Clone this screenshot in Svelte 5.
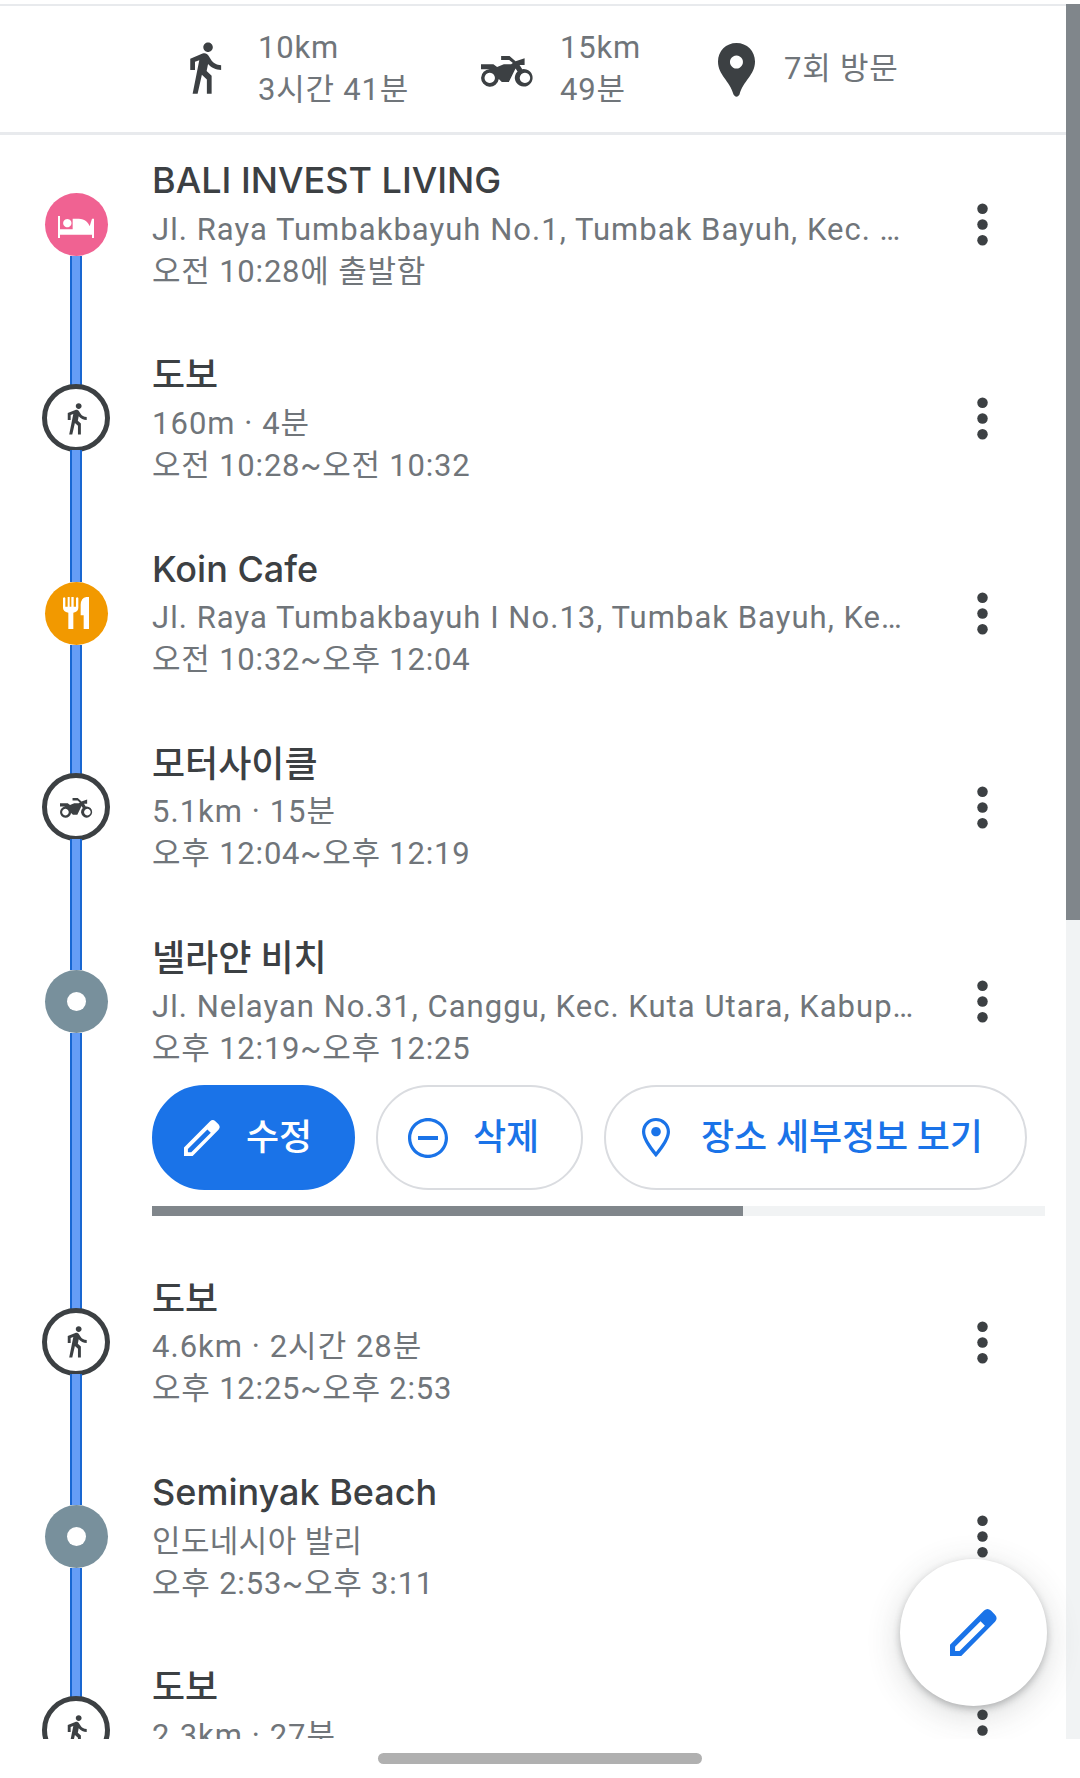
<script lang="ts">
    type Stop = {
        kind: string;
        title: string;
        detail: string;
        time: string;
        transport?: boolean;
        open?: boolean;
    };

    const icons: Record<string, { box: string, path: string }> = {
        walk: {
            box: "0 0 24 24",
            path: "M13.5 5.5c1.1 0 2-.9 2-2s-.9-2-2-2-2 .9-2 2 .9 2 2 2zM9.8 8.9L7 23h2.1l1.8-8 2.1 2v6h2v-7.5l-2.1-2 .6-3C14.8 12 16.8 13 19 13v-2c-1.9 0-3.5-1-4.3-2.4l-1-1.6c-.4-.6-1-1-1.7-1-.3 0-.5.1-.8.1L6 8.3V13h2V9.6l1.8-.7"
        },
        motorcycle: {
            box: "0 0 158 94",
            path: "M60 0h25l18 16 27-9v20h-15l8 13a26.500 26.500 0 1 1-14 7l-6-9-20 41H62l-9-9A26.500 26.500 0 1 1 26 40H0V25h37l11 8 20-8h22l5-4-11-9H60zM26 51a15.500 15.500 0 1 0 .1 0zM131 51a15.500 15.500 0 1 0 .1 0z"
        },
        bed: {
            box: "0 0 108 66",
            path: "M0 0h6v40h38V8h18c19 0 30 12 33 23l7-23h6v58h-6V56H6v10H0zM28 9a12.500 12.500 0 1 1-.1 0z"
        },
        food: {
            box: "0 0 78 98",
            path: "M0 3q4-4 7 0v27h7V0h6v30h5V0h7v30h7V3q4-4 7 0v30q0 12-15 15v50H16V48Q0 45 0 33zM78 0v98H62V56h-9V24Q54 2 70 0z"
        },
        pencil: {
            box: "0 0 48 48",
            path: "M0 48V36.500L34.800 1.600Q38.300-1.500 41.800 1.600L46 5.800Q49.200 9.500 46 13L11.500 48zM5.200 43h4.500l26-26-4.500-4.500-26 26z"
        },
        remove: {
            box: "2 2 20 20",
            path: "M7 11v2h10v-2H7zm5-9C6.480 2 2 6.480 2 12s4.480 10 10 10 10-4.480 10-10S17.520 2 12 2zm0 18.400a8.400 8.400 0 1 1 0-16.800 8.400 8.400 0 0 1 0 16.800z"
        },
        place: {
            box: "5 2 14 20",
            path: "M12 2C8.130 2 5 5.130 5 9c0 5.250 7 13 7 13s7-7.750 7-13c0-3.870-3.130-7-7-7zM6.600 9a5.400 5.400 0 0 1 10.800 0c0 2.880-2.880 7.190-5.400 10.400C9.530 16.210 6.600 11.850 6.600 9zM12 6.600a2.400 2.400 0 1 0 .01 0z"
        },
        pin: {
            box: "0 0 37 54",
            path: "M18.500 0C8 0 0 8 0 18.500 0 32 12 38 15.500 51.500q3 4.500 6 0C25 38 37 32 37 18.500 37 8 29 0 18.500 0zm0 12.500a6.500 6.500 0 1 1-.1 0z"
        }
    };

    const stops: Stop[] = [
        { kind: "bed", title: "BALI INVEST LIVING", detail: "Jl. Raya Tumbakbayuh No.1, Tumbak Bayuh, Kec. …", time: "오전 10:28에 출발함" },
        { kind: "walk", title: "도보", detail: "160m · 4분", time: "오전 10:28~오전 10:32", transport: true },
        { kind: "food", title: "Koin Cafe", detail: "Jl. Raya Tumbakbayuh I No.13, Tumbak Bayuh, Ke…", time: "오전 10:32~오후 12:04" },
        { kind: "motorcycle", title: "모터사이클", detail: "5.1km · 15분", time: "오후 12:04~오후 12:19", transport: true },
        { kind: "dot", title: "넬라얀 비치", detail: "Jl. Nelayan No.31, Canggu, Kec. Kuta Utara, Kabup…", time: "오후 12:19~오후 12:25", open: true },
        { kind: "walk", title: "도보", detail: "4.6km · 2시간 28분", time: "오후 12:25~오후 2:53", transport: true },
        { kind: "dot", title: "Seminyak Beach", detail: "인도네시아 발리", time: "오후 2:53~오후 3:11" },
        { kind: "walk", title: "도보", detail: "2.3km · 27분", time: "오후 5:11~오후 5:38", transport: true }
    ];

    const isLatin = (text: string) => /[a-z]/i.test(text);
    const isHangul = (text: string) => /^[가-힣 ]+$/.test(text);
</script>

{#snippet icon(name: string)}
    <svg class="icon {name}" viewBox={icons[name].box} preserveAspectRatio="none" aria-hidden="true">
        <path fill-rule="evenodd" d={icons[name].path} />
    </svg>
{/snippet}

<main>
    <div class="viewport">
        <div class="page">
            <header>
                <div class="stat walked">
                    {@render icon("walk")}
                    <div>10km<br>3시간 41분</div>
                </div>
                <div class="stat ridden">
                    {@render icon("motorcycle")}
                    <div>15km<br>49분</div>
                </div>
                <div class="stat visits">
                    {@render icon("pin")}
                    <div>7회 방문</div>
                </div>
            </header>

            {#each stops as stop, i}
                <section>
                    <div class="rail">
                        <div class="line before" class:hidden={i === 0}></div>
                        <div class="node {stop.kind}" class:transport={stop.transport}>
                            {#if stop.kind === "dot"}
                                <span class="hole"></span>
                            {:else}
                                {@render icon(stop.kind)}
                            {/if}
                        </div>
                        <div class="line after"></div>
                    </div>
                    <div class="content">
                        <div class="summary">
                            <div class="text">
                                <h2 class:latin={isLatin(stop.title)}>{stop.title}</h2>
                                <p class:latin={isLatin(stop.detail)} class:hangul={isHangul(stop.detail)}>{stop.detail}</p>
                                <p>{stop.time}</p>
                            </div>
                            <button class="menu" aria-label="메뉴">
                                <svg viewBox="0 0 24 24"><circle cx="12" cy="6" r="2" /><circle cx="12" cy="12" r="2" /><circle cx="12" cy="18" r="2" /></svg>
                            </button>
                        </div>
                        {#if stop.open}
                            <div class="actions">
                                <button class="action primary">{@render icon("pencil")}<span>수정</span></button>
                                <button class="action delete">{@render icon("remove")}<span>삭제</span></button>
                                <button class="action details">{@render icon("place")}<span>장소 세부정보 보기</span></button>
                            </div>
                            <div class="scroller"><div></div></div>
                        {/if}
                    </div>
                </section>
            {/each}
        </div>
        <div class="scrollbar"><div></div></div>
        <button class="fab" aria-label="수정">{@render icon("pencil")}</button>
    </div>
    <footer><div class="home"></div></footer>
</main>

<style>
    :global(body) {
        background: #fff;
    }

    main {
        width: 1080px;
        height: 1778px;
        overflow: hidden;

        font-family: Roboto, "Noto Sans CJK KR", sans-serif;
        font-size: 31px;
        line-height: 42px;
        letter-spacing: 0.8px;
        color: #70757a;
    }

    .viewport {
        position: relative;
        display: flex;
        height: 1735px;
        margin-top: 4px;
        overflow: hidden;
    }

    .page {
        width: 1066px;
        flex: none;
    }

    .scrollbar {
        width: 14px;
        background: #f1f3f4;
    }

    .scrollbar div {
        height: 916px;
        background: #80868b;
    }

    header {
        box-sizing: border-box;
        height: 131px;
        border-top: 2px solid #e8eaed;
        border-bottom: 3px solid #e8eaed;
        padding-left: 176px;

        display: flex;
        align-items: center;
    }

    .stat {
        display: flex;
        align-items: center;
        white-space: nowrap;
    }

    .icon {
        display: block;
        flex: none;
        fill: #3c4043;
    }

    .walked {
        width: 305px;
        gap: 25px;
    }

    .walked .icon {
        width: 57px;
        height: 57px;
        margin-bottom: 3px;
    }

    .ridden {
        width: 237px;
        gap: 26px;
    }

    .ridden .icon {
        width: 53px;
        height: 31px;
        margin-top: 4px;
    }

    .visits {
        gap: 29px;
    }

    .visits .icon {
        width: 37px;
        height: 54px;
        margin-top: 1px;
    }

    section {
        min-height: 194.3px;
        display: flex;
    }

    .rail {
        width: 152px;
        flex: none;

        display: flex;
        flex-direction: column;
        align-items: center;
    }

    .line {
        box-sizing: border-box;
        width: 12px;
        background: #669df6;
        border: solid #1967d2;
        border-width: 0 2px;
    }

    .line.before {
        height: 58px;
    }

    .line.hidden {
        visibility: hidden;
    }

    .line.after {
        flex: 1;
    }

    .node {
        box-sizing: border-box;
        width: 63px;
        height: 63px;
        border-radius: 50%;

        display: flex;
        align-items: center;
        justify-content: center;
        flex: none;
    }

    .node.bed {
        background: #f06292;
    }

    .node.food {
        background: #f29900;
    }

    .node.dot {
        background: #78909c;
    }

    .node.transport {
        width: 68px;
        height: 68px;
        margin: -3px 0 -2px;
        border: 5px solid #3c4043;
    }

    .node.bed .icon {
        width: 36px;
        height: 22px;
        margin-top: 5px;
        fill: #fff;
    }

    .node.food .icon {
        width: 26px;
        height: 32px;
        fill: #fff;
    }

    .node.walk .icon {
        width: 35px;
        height: 35px;
    }

    .node.motorcycle .icon {
        width: 33px;
        height: 20px;
        margin-top: 2px;
    }

    .hole {
        width: 19px;
        height: 19px;
        border-radius: 50%;
        background: #fff;
    }

    .content {
        flex: 1;
    }

    .summary {
        display: flex;
    }

    .text {
        width: 799px;
        height: 157px;
        padding-top: 22px;
        box-sizing: border-box;
        white-space: nowrap;
    }

    h2 {
        margin: 0 0 5.6px;

        color: #3c4043;
        font-family: Lato, "Noto Sans CJK KR", sans-serif;
        font-size: 36px;
        font-weight: 500;
        line-height: 46px;
        letter-spacing: 0;
    }

    h2.latin {
        font-family: Inter, sans-serif;
    }

    p {
        margin: 0;
    }

    p.latin {
        letter-spacing: 1.03px;
    }

    p.hangul {
        letter-spacing: 0.4px;
    }

    button {
        border: none;
        background: transparent;
        padding: 0;
        font: inherit;
        letter-spacing: 0;
    }

    .menu {
        width: 63px;
        height: 179px;

        display: flex;
        align-items: center;
    }

    .menu svg {
        width: 63px;
        height: 63px;
        fill: #3c4043;
    }

    .actions {
        display: flex;
        gap: 21px;
        margin-top: -6px;
    }

    .action {
        box-sizing: border-box;
        height: 105px;
        border: 2px solid #dadce0;
        border-radius: 53px;

        display: flex;
        align-items: center;

        color: #1a73e8;
        font-size: 36px;
        font-weight: 500;
        line-height: 46px;
        letter-spacing: -0.1px;
        white-space: nowrap;
    }

    .action .icon {
        fill: #1a73e8;
    }

    .action.primary {
        width: 203px;
        padding-left: 30px;
        gap: 26px;
        background: #1a73e8;
        border-color: #1a73e8;
        color: #fff;
    }

    .primary .icon {
        width: 36px;
        height: 36px;
        fill: #fff;
    }

    .action.delete {
        width: 207px;
        padding-left: 30px;
        gap: 25px;
    }

    .delete .icon {
        width: 40px;
        height: 40px;
    }

    .action.details {
        width: 423px;
        padding-left: 36px;
        gap: 31px;
    }

    .details .icon {
        width: 28px;
        height: 39px;
    }

    .scroller {
        width: 893px;
        height: 10px;
        margin: 16px 0 36.500px;
        background: #f1f3f4;
    }

    .scroller div {
        width: 591px;
        height: 10px;
        background: #80868b;
    }

    /* floats over the list, above the bottom edge */
    .fab {
        position: absolute;
        right: 33px;
        bottom: 33px;
        width: 147px;
        height: 147px;
        border-radius: 50%;
        background: #fff;
        box-shadow: 0 3px 7px rgba(60, 64, 67, 0.3), 0 8px 34px rgba(60, 64, 67, 0.2);

        display: flex;
        align-items: center;
        justify-content: center;
    }

    .fab .icon {
        width: 47px;
        height: 47px;
        fill: #1a73e8;
    }

    footer {
        height: 39px;

        display: flex;
        justify-content: center;
        align-items: center;
    }

    .home {
        width: 324px;
        height: 11px;
        border-radius: 6px;
        background: #b0b0b0;
    }
</style>
